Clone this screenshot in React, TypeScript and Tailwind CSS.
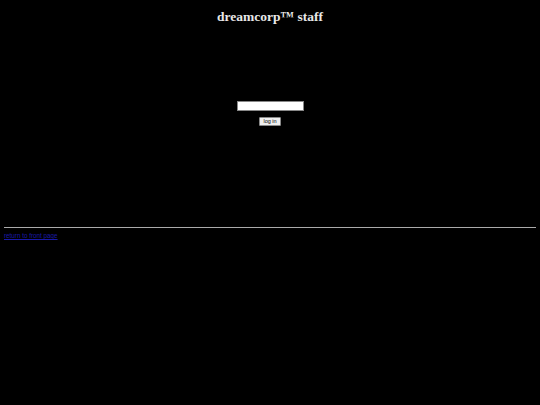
import React from 'react';

const App: React.FC = () => {
  return (
    <div className="min-h-[405px] bg-black px-[4px] pt-[9px]" style={{ fontFamily: '"Liberation Serif", serif' }}>
      <h1 className="text-center text-[13.5px] font-bold leading-[16px] text-[#e8e8e8]">dreamcorp™ staff</h1>
      <div className="h-[202px] pt-[76px] flex flex-col items-center">
        <input
          type="password"
          className="w-[67px] h-[10px] bg-white border border-[#888] outline-none"
        />
        <button
          type="button"
          className="mt-[6px] h-[9px] px-[3px] bg-[#efefef] border border-[#888] rounded-[1px] text-[5.5px] leading-[7px] text-black"
          style={{ fontFamily: '"Liberation Sans", sans-serif' }}
        >
          log in
        </button>
      </div>
      <hr className="border-0 h-[1px] bg-[#aaa]" />
      <a
        href="#"
        className="block mt-[4px] text-[6.3px] leading-[7px] text-[#1a1aa8] underline"
        style={{ fontFamily: '"Liberation Sans", sans-serif' }}
      >
        return to front page
      </a>
    </div>
  );
};

export default App;
